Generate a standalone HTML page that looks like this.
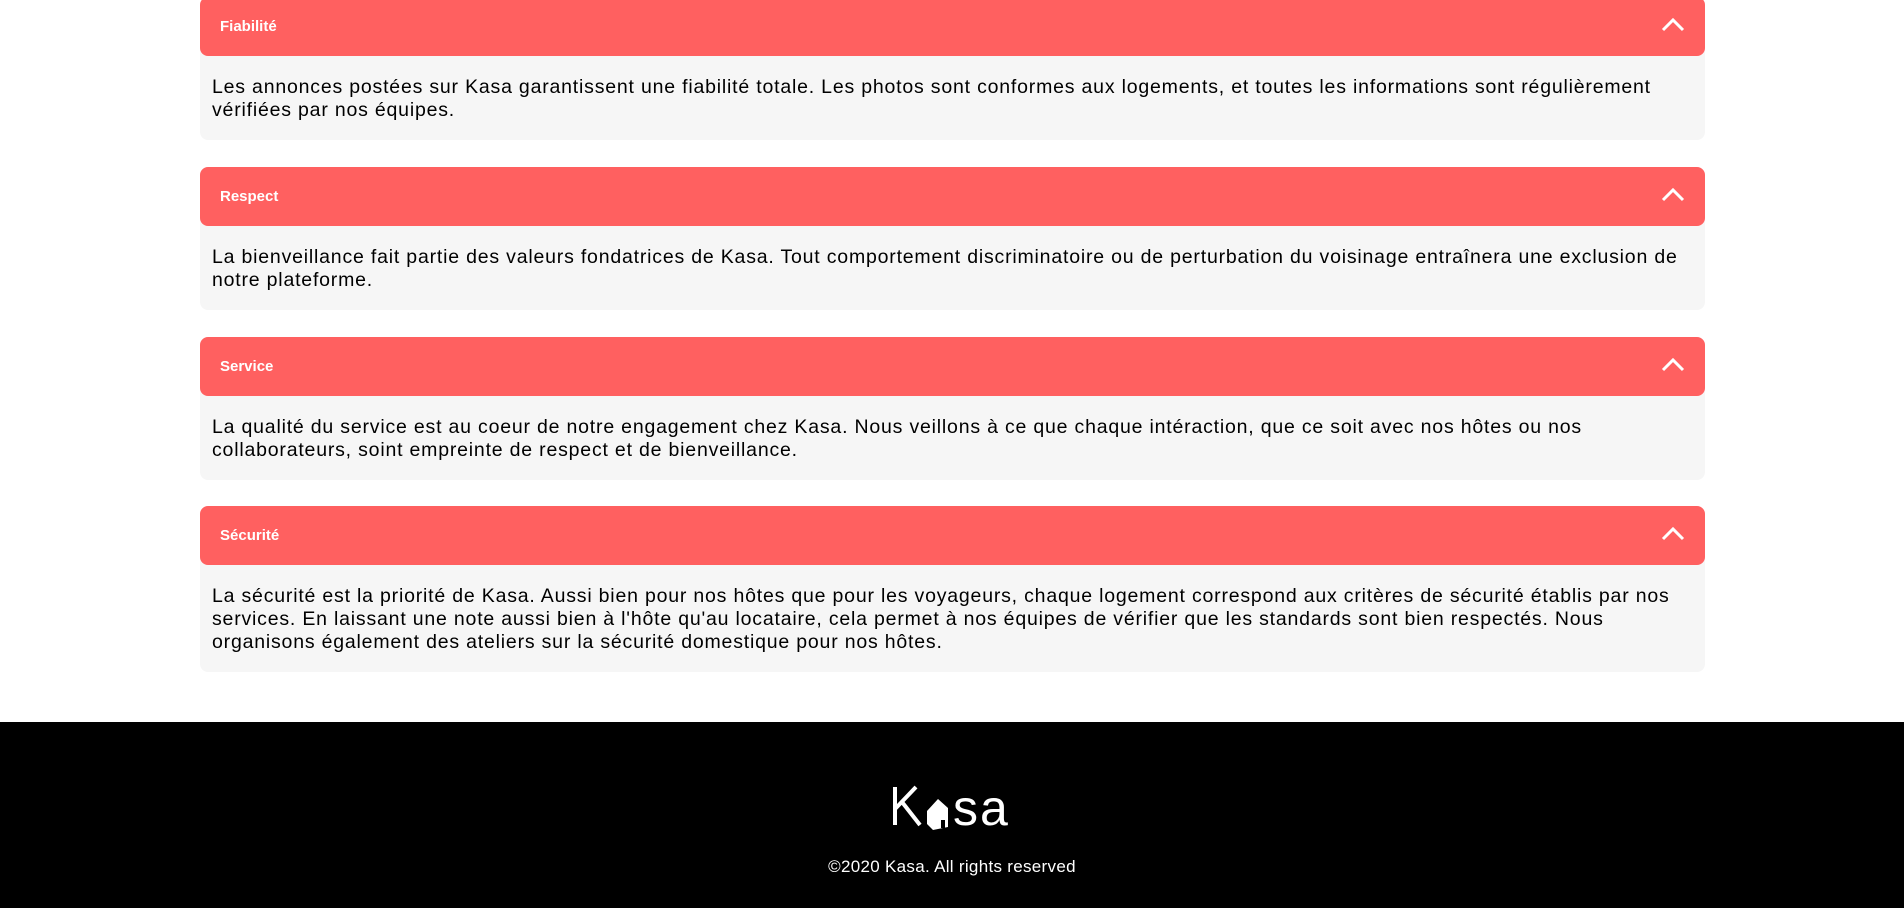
<!DOCTYPE html>
<html><head><meta charset="utf-8"><style>
*{margin:0;padding:0;box-sizing:border-box}
body{width:1904px;height:908px;background:#fff;font-family:"Liberation Sans",sans-serif;position:relative;overflow:hidden}
.item{position:absolute;left:200px;width:1505px}
.bar{height:59px;background:#ff6060;border-radius:8px;position:relative;color:#fff;font-weight:bold;font-size:15px;line-height:59px;padding-left:20px;z-index:2}
.bar svg{position:absolute;right:20px;top:20px}
.body{background:#f6f6f6;margin-top:-8px;padding:28px 12px 18px 12px;border-radius:0 0 8px 8px;font-size:19.5px;letter-spacing:0.8px;line-height:23px;color:#000;white-space:nowrap}
footer{position:absolute;left:0;top:722px;width:1904px;height:186px;background:#000}
.logo{position:absolute;left:890px;top:783px}
.copy{position:absolute;top:857px;width:100%;text-align:center;font-size:17px;color:#fff;letter-spacing:.3px}
</style></head><body>
<div class="item" style="top:-3px">
<div class="bar">Fiabilité<svg width="24" height="16" viewBox="0 0 24 16"><path d="M2 13 L12 3 L22 13" stroke="#fff" stroke-width="3" fill="none"/></svg></div>
<div class="body" style="height:92px">Les annonces postées sur Kasa garantissent une fiabilité totale. Les photos sont conformes aux logements, et toutes les informations sont régulièrement<br>vérifiées par nos équipes.</div>
</div>
<div class="item" style="top:167px">
<div class="bar">Respect<svg width="24" height="16" viewBox="0 0 24 16"><path d="M2 13 L12 3 L22 13" stroke="#fff" stroke-width="3" fill="none"/></svg></div>
<div class="body" style="height:92px">La bienveillance fait partie des valeurs fondatrices de Kasa. Tout comportement discriminatoire ou de perturbation du voisinage entraînera une exclusion de<br>notre plateforme.</div>
</div>
<div class="item" style="top:337px">
<div class="bar">Service<svg width="24" height="16" viewBox="0 0 24 16"><path d="M2 13 L12 3 L22 13" stroke="#fff" stroke-width="3" fill="none"/></svg></div>
<div class="body" style="height:92px">La qualité du service est au coeur de notre engagement chez Kasa. Nous veillons à ce que chaque intéraction, que ce soit avec nos hôtes ou nos<br>collaborateurs, soint empreinte de respect et de bienveillance.</div>
</div>
<div class="item" style="top:506px">
<div class="bar">Sécurité<svg width="24" height="16" viewBox="0 0 24 16"><path d="M2 13 L12 3 L22 13" stroke="#fff" stroke-width="3" fill="none"/></svg></div>
<div class="body" style="height:115px">La sécurité est la priorité de Kasa. Aussi bien pour nos hôtes que pour les voyageurs, chaque logement correspond aux critères de sécurité établis par nos<br>services. En laissant une note aussi bien à l'hôte qu'au locataire, cela permet à nos équipes de vérifier que les standards sont bien respectés. Nous<br>organisons également des ateliers sur la sécurité domestique pour nos hôtes.</div>
</div>
<footer></footer>
<svg class="logo" width="130" height="50" viewBox="0 0 130 50">
<path d="M5 4 L5 42 M5 26 L26 4 M12 19 L30 42" stroke="#fff" stroke-width="4" fill="none"/>
<path d="M37 28 L48 16 L58 25 L58 44 L43 47 L37 41 Z" fill="#fff"/>
<path d="M51 45 L51 37 L55 37 L55 45" fill="#000"/>
<text x="63" y="42" font-family="Liberation Sans" font-size="50" fill="#fff" letter-spacing="2">sa</text>
</svg>
<div class="copy">©2020 Kasa. All rights reserved</div>
</body></html>
